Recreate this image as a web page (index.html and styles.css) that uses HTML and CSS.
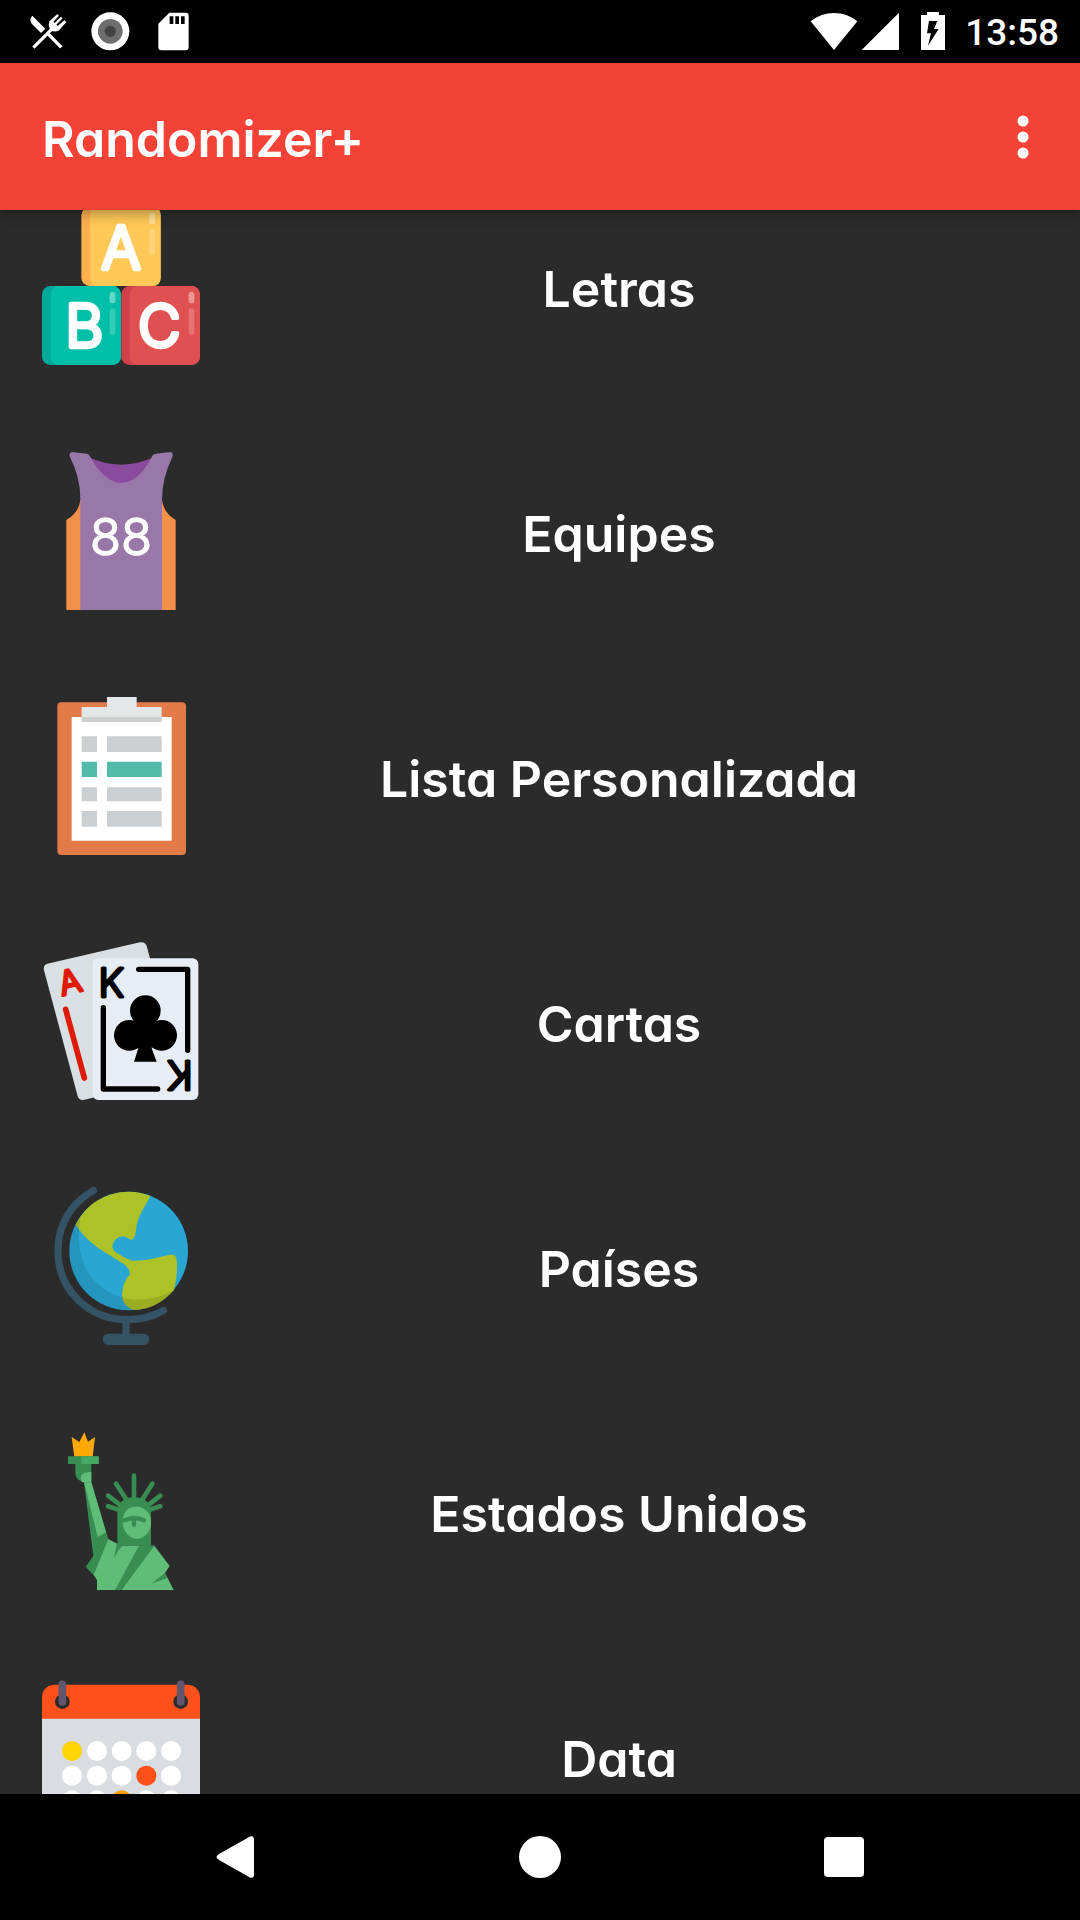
FILE: index.html
```html
<!DOCTYPE html>
<html lang="pt-BR">
<head>
  <meta charset="UTF-8">
  <meta name="viewport" content="width=device-width, initial-scale=1">
  <title>Randomizer+</title>
  <link rel="stylesheet" href="styles.css">
</head>
<body>
  <div class="status-bar">
    <div class="status-group">
      <svg class="status-icon" viewBox="84 36 120 120" aria-hidden="true">
        <path d="M97 47L136 86L123 99L99 75Q84 60 97 47Z" fill="#fff"/>
        <path d="M100 143L163 80M140 97L184 142" fill="none" stroke="#fff" stroke-width="10"/>
        <path d="M148 64L172 42L177 47L160 65L164 69L183 50L188 55L169 74L173 78L193 61L199 67L177 91Q163 98 153 91Q143 81 148 64Z" fill="#fff"/>
      </svg>
      <svg class="status-icon" viewBox="270 36 120 120" aria-hidden="true">
        <circle cx="331" cy="94" r="57" fill="#fff"/>
        <circle cx="331" cy="94" r="37" fill="#6e6e6e"/>
        <circle cx="331" cy="94" r="17" fill="#424242"/>
      </svg>
      <svg class="status-icon" viewBox="456 36 120 120" aria-hidden="true">
        <path d="M508 38H557Q566 38 566 47V142Q566 151 557 151H484Q475 151 475 142V71Z" fill="#fff"/>
        <path d="M509 49H520V72H509ZM526 49H537V72H526ZM543 49H554V72H543Z" fill="#000"/>
      </svg>
    </div>
    <div class="status-group status-right">
      <div class="signals">
        <svg class="wifi" viewBox="93 36 144 120" aria-hidden="true">
          <path d="M95 64Q126 39 165 39Q204 39 235 64L165 150Z" fill="#fff"/>
        </svg>
        <svg class="status-icon" viewBox="246 36 120 120" aria-hidden="true">
          <path d="M248 150L360 38V150Z" fill="#fff"/>
        </svg>
      </div>
      <svg class="status-icon" viewBox="402 36 120 120" aria-hidden="true">
        <path d="M426 45H444V36H480V45H498V150H426Z" fill="#fff"/>
        <path d="M450 63H475L465 87H479L447 137L456 100H444Z" fill="#000"/>
      </svg>
      <time class="clock">13:58</time>
    </div>
  </div>

  <header class="app-bar">
    <h1>Randomizer+</h1>
    <button class="menu-button" type="button" aria-label="Mais opções">
      <svg viewBox="0 0 48 48" aria-hidden="true">
        <circle cx="24" cy="8" r="5.5"/>
        <circle cx="24" cy="24" r="5.5"/>
        <circle cx="24" cy="40" r="5.5"/>
      </svg>
    </button>
  </header>

  <main>
    <ul class="options">
      <li>
        <a class="option" href="#letras">
          <svg class="option-icon" viewBox="36 6 474 474" aria-hidden="true">
            <rect x="154" y="6" width="238" height="237" rx="25" fill="#ffb04c"/>
            <path d="M205 6H367Q392 6 392 31V218Q392 243 367 243H205Q180 243 180 218V31Q180 6 205 6Z" fill="#ffc857"/>
            <rect x="36" y="243" width="237" height="237" rx="25" fill="#00a99a"/>
            <rect x="62" y="243" width="211" height="237" rx="25" fill="#00bfa8"/>
            <rect x="274" y="243" width="236" height="237" rx="25" fill="#d14149"/>
            <rect x="299" y="243" width="211" height="237" rx="25" fill="#e05050"/>
            <g fill="#fff" opacity="0.4">
              <rect x="358" y="22" width="17" height="35" rx="8"/>
              <rect x="239" y="260" width="17" height="35" rx="8"/>
              <rect x="476" y="260" width="17" height="35" rx="8"/>
            </g>
            <g fill="#fff" opacity="0.2">
              <rect x="358" y="72" width="17" height="79" rx="8"/>
              <rect x="239" y="310" width="17" height="79" rx="8"/>
              <rect x="476" y="310" width="17" height="79" rx="8"/>
            </g>
            <g class="block-letter">
              <text x="273" y="191">A</text>
              <text x="163" y="426">B</text>
              <text x="388" y="426">C</text>
            </g>
          </svg>
          <span class="option-name">Letras</span>
        </a>
      </li>
      <li>
        <a class="option" href="#equipes">
          <svg class="option-icon" viewBox="36 36 474 474" aria-hidden="true">
            <path d="M151 180Q147 218 109 240V510H437V240Q400 218 396 180Z" fill="#f28f48"/>
            <path d="M176 52Q273 96 371 52L354 130H200Z" fill="#8a4a9e"/>
            <path d="M126 36L171 41Q177 42 181 51Q188 66 202 84Q236 128 273 129Q312 129 342 88Q359 66 366 49Q369 42 377 41L422 36Q430 38 428 49Q395 116 396 184V510H151V184Q153 116 119 49Q117 38 126 36Z" fill="#9978a9"/>
            <text class="jersey-number" x="273" y="344">88</text>
          </svg>
          <span class="option-name">Equipes</span>
        </a>
      </li>
      <li>
        <a class="option" href="#lista">
          <svg class="option-icon" viewBox="36 36 474 474" aria-hidden="true">
            <rect x="82" y="52" width="386" height="458" rx="12" fill="#e37b49"/>
            <path d="M125 96H425V467H125Z" fill="#fff"/>
            <path d="M231 36H320V66H395V97H155V66H231Z" fill="#e3e7e7"/>
            <path d="M155 96H395V111H155Z" fill="#cccfce"/>
            <path d="M155 154H201V201H155ZM231 154H395V201H231ZM155 307H201V349H155ZM231 307H395V349H231ZM155 378H201V425H155ZM231 378H395V425H231Z" fill="#cbcfd2"/>
            <path d="M155 230H201V276H155ZM231 230H395V276H231Z" fill="#52bca8"/>
          </svg>
          <span class="option-name">Lista Personalizada</span>
        </a>
      </li>
      <li>
        <a class="option" href="#cartas">
          <svg class="option-icon" viewBox="36 36 474 474" aria-hidden="true">
            <path d="M52 101L330 37Q345 34 350 48L372 130L202 500L160 510Q147 511 143 498L42 121Q39 105 52 101Z" fill="#d9e0e3"/>
            <rect x="188" y="85" width="317" height="425" rx="17" fill="#e6edf4"/>
            <path d="M107 238L163 444" fill="none" stroke="#df1b05" stroke-width="17" stroke-linecap="round"/>
            <g fill="none" stroke="#000" stroke-width="16" stroke-linecap="round" stroke-linejoin="round">
              <path d="M326 118H473V361M220 233V477H383"/>
            </g>
            <text class="ace" transform="rotate(-14 118 160)" x="121" y="191">A</text>
            <text class="king" x="244" y="201">K</text>
            <text class="king" transform="rotate(180 450 436)" x="450" y="479">K</text>
            <circle cx="346" cy="242" r="46"/>
            <ellipse cx="298" cy="316" rx="46" ry="46"/>
            <ellipse cx="395" cy="316" rx="46" ry="46"/>
            <path d="M315 270H377L365 355L380 395H312L325 355Z"/>
          </svg>
          <span class="option-name">Cartas</span>
        </a>
      </li>
      <li>
        <a class="option" href="#paises">
          <svg class="option-icon" viewBox="36 36 474 474" aria-hidden="true">
            <path d="M190 47C118 88 84 154 84 228C84 350 181 434 292 434Q350 434 400 407" fill="none" stroke="#345364" stroke-width="22" stroke-linecap="round"/>
            <path d="M277 436H299V476H341A17 17 0 0 1 341 510H235A17 17 0 0 1 235 476H277Z" fill="#345364"/>
            <circle cx="296" cy="228" r="178" fill="#29a6d2"/>
            <path d="M137 149C169 86 228 50 296 50Q331 50 361 63C345 98 322 120 318 166C315 191 308 198 299 192Q279 177 261 190Q247 201 247 215Q250 230 268 238Q290 254 308 257C350 259 395 243 422 239Q440 236 441 264Q442 309 432 345Q383 402 312 405Q273 393 277 352Q280 317 299 299Q302 284 282 267C236 235 180 215 137 149Z" fill="#adc226"/>
            <path d="M153 123Q118 170 118 228C118 326 198 406 296 406Q382 406 432 346C270 430 111 314 153 123Z" fill="#000" opacity="0.1"/>
          </svg>
          <span class="option-name">Países</span>
        </a>
      </li>
      <li>
        <a class="option" href="#estados-unidos">
          <svg class="option-icon" viewBox="36 36 474 474" aria-hidden="true">
            <path d="M125 51L148 66L163 37L174 65L195 51L188 110H133Z" fill="#ffa800"/>
            <path d="M114 109H206V132H184V187H162Q136 181 136 157V132H114Z" fill="#388d51"/>
            <path d="M154 109H206V132H154Z" fill="#48a865"/>
            <path d="M184 156V187H157Q150 181 154 167Q160 156 184 156Z" fill="#60bd78"/>
            <path d="M162 187H184L235 357L214 465L193 468L167 440L190 408Z" fill="#388d51"/>
            <path d="M162 187H184L228 337L203 351Z" fill="#60bd78"/>
            <path d="M312 240V167M294 246L258 191M332 246L367 191M276 259L234 227M350 259L391 227M267 269L234 259M358 269L391 259" fill="none" stroke="#388d51" stroke-width="14" stroke-linecap="round"/>
            <path d="M262 282Q263 232 312 232Q363 232 363 282V377H262Z" fill="#388d51"/>
            <ellipse cx="321" cy="308" rx="42" ry="48" fill="#60bd78"/>
            <ellipse cx="311" cy="305" rx="33" ry="44" fill="#60bd78"/>
            <path d="M283 301Q312 287 342 301M312 297V314" fill="none" stroke="#388d51" stroke-width="13" stroke-linecap="round"/>
            <path d="M235 357L262 371V377H373L419 438L405 459L431 510H201V480L191 465Z" fill="#60bd78"/>
            <path d="M260 371L279 377Q264 387 252 416ZM327 377H373L275 510H255ZM405 459L364 491L411 474Z" fill="#388d51"/>
          </svg>
          <span class="option-name">Estados Unidos</span>
        </a>
      </li>
      <li>
        <a class="option" href="#data">
          <svg class="option-icon" viewBox="36 36 474 474" aria-hidden="true">
            <path d="M36 150H510V475Q510 510 475 510H71Q36 510 36 475Z" fill="#d9dce1"/>
            <path d="M36 161V94Q39 62 72 59H474Q507 62 510 94V161Z" fill="#ff5119"/>
            <circle cx="97" cy="110" r="22" fill="#2b2b2b"/>
            <circle cx="452" cy="110" r="22" fill="#2b2b2b"/>
            <path d="M97 58V111M452 58V111" stroke="#62566f" stroke-width="23" stroke-linecap="round"/>
            <g fill="#fff">
              <circle cx="126" cy="258" r="30" fill="#ffd400"/>
              <circle cx="201" cy="258" r="30"/>
              <circle cx="275" cy="258" r="30"/>
              <circle cx="349" cy="258" r="30"/>
              <circle cx="423" cy="258" r="30"/>
              <circle cx="126" cy="332" r="30"/>
              <circle cx="201" cy="332" r="30"/>
              <circle cx="275" cy="332" r="30"/>
              <circle cx="349" cy="332" r="30" fill="#ff5119"/>
              <circle cx="423" cy="332" r="30"/>
              <circle cx="126" cy="406" r="30"/>
              <circle cx="201" cy="406" r="30"/>
              <circle cx="275" cy="406" r="30" fill="#ff9f00"/>
              <circle cx="349" cy="406" r="30"/>
              <circle cx="423" cy="406" r="30"/>
            </g>
          </svg>
          <span class="option-name">Data</span>
        </a>
      </li>
    </ul>
  </main>

  <nav class="nav-bar">
    <button type="button" aria-label="Voltar">
      <svg viewBox="0 0 42 42" aria-hidden="true">
        <path d="M35 0.5Q39 -1 39 4V38Q39 43 35 41.5L4 24Q-1 21 4 18Z"/>
      </svg>
    </button>
    <button type="button" aria-label="Início">
      <svg viewBox="0 0 42 42" aria-hidden="true">
        <circle cx="21" cy="21" r="21"/>
      </svg>
    </button>
    <button type="button" aria-label="Recentes">
      <svg viewBox="0 0 42 42" aria-hidden="true">
        <rect x="1" y="1" width="40" height="40" rx="4"/>
      </svg>
    </button>
  </nav>
</body>
</html>
```
FILE: styles.css
```css
* {
  box-sizing: border-box;
}

body {
  display: flex;
  flex-direction: column;
  height: 100vh;
  margin: 0;
  background: #2b2b2b;
  color: #fff;
  font-family: Inter, "Liberation Sans", sans-serif;
  font-feature-settings: "cv11", "ss03";
}

button {
  padding: 0;
  border: none;
  background: none;
  cursor: pointer;
}

svg {
  display: block;
  flex-shrink: 0;
}

/* status bar */
.status-bar {
  display: flex;
  justify-content: space-between;
  flex-shrink: 0;
  padding: 12px 21px 11px 28px;
  background: #000;
}

.status-group {
  display: flex;
  align-items: center;
  gap: 22px;
}

.status-right {
  gap: 12px;
}

.signals {
  display: flex;
  gap: 3px;
}

.status-icon {
  width: 40px;
  height: 40px;
}

.wifi {
  width: 48px;
  height: 40px;
}

.clock {
  padding-top: 2px;
  font-family: Roboto, sans-serif;
  font-size: 37px;
  font-weight: 500;
  line-height: 38px;
}

/* app bar */
.app-bar {
  position: relative;
  z-index: 1;
  display: flex;
  align-items: center;
  justify-content: space-between;
  flex-shrink: 0;
  height: 147px;
  padding: 0 33px 0 42px;
  background: #f44336;
  box-shadow: 0 4px 12px rgba(0, 0, 0, 0.3);
}

h1,
.option-name {
  padding-top: 5px;
  font-size: 50px;
  font-weight: 600;
  line-height: 60px;
}

h1 {
  margin: 0;
}

.menu-button svg {
  width: 48px;
  height: 48px;
  fill: #fff;
}

/* list, scrolled a little past its first row */
main {
  flex: 1;
  min-height: 0;
  overflow: hidden;
}

.options {
  margin: -47px 0 0;
  padding: 0;
  list-style: none;
}

.option {
  display: flex;
  align-items: center;
  padding: 44px 42px 43px;
  color: #fff;
  text-decoration: none;
}

.option-icon {
  width: 158px;
  height: 158px;
}

.option-name {
  flex: 1;
  text-align: center;
}

.block-letter,
.jersey-number,
.ace,
.king {
  text-anchor: middle;
  stroke-linejoin: round;
}

.block-letter {
  fill: #fff;
  stroke: #fff;
  stroke-width: 13px;
  font-size: 176px;
  font-weight: 300;
}

.jersey-number {
  fill: #fff;
  stroke: #fff;
  stroke-width: 5px;
  font-size: 152px;
  font-weight: 300;
}

.ace {
  fill: #df1b05;
  stroke: #df1b05;
  stroke-width: 9px;
  font-size: 98px;
  font-weight: 300;
}

.king {
  fill: #000;
  stroke: #000;
  stroke-width: 9px;
  font-size: 118px;
  font-weight: 300;
}

/* navigation bar */
.nav-bar {
  display: grid;
  grid-template-columns: repeat(3, 1fr);
  flex-shrink: 0;
  height: 126px;
  padding: 0 84px;
  background: #000;
}

.nav-bar button {
  display: flex;
  align-items: center;
  justify-content: center;
}

.nav-bar svg {
  width: 42px;
  height: 42px;
  fill: #fff;
}
```
